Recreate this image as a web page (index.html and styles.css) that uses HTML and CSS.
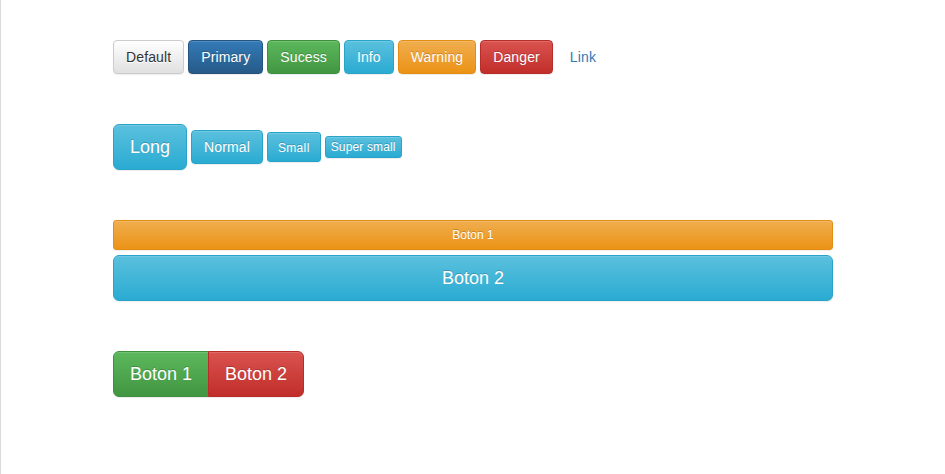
FILE: index.html
```html
<!DOCTYPE html>
<html lang="es">
<head>
<meta charset="utf-8">
<title>Botones</title>
<link rel="stylesheet" href="styles.css">
</head>
<body>
<div class="container">
  <div class="row">
    <button class="btn btn-default">Default</button>
    <button class="btn btn-primary">Primary</button>
    <button class="btn btn-success">Sucess</button>
    <button class="btn btn-info">Info</button>
    <button class="btn btn-warning">Warning</button>
    <button class="btn btn-danger">Danger</button>
    <button class="btn btn-link">Link</button>
  </div>
  <div class="row row-sizes">
    <button class="btn btn-info btn-lg">Long</button>
    <button class="btn btn-info">Normal</button>
    <button class="btn btn-info btn-sm">Small</button>
    <button class="btn btn-info btn-xs">Super small</button>
  </div>
  <div class="stack">
    <button class="btn btn-warning btn-sm btn-block">Boton 1</button>
    <button class="btn btn-info btn-lg btn-block">Boton 2</button>
  </div>
  <div class="btn-group">
    <button class="btn btn-success btn-lg">Boton 1</button>
    <button class="btn btn-danger btn-lg">Boton 2</button>
  </div>
</div>
</body>
</html>
```
FILE: styles.css
```css
* { box-sizing: border-box; }
html, body { margin: 0; padding: 0; }
body {
  background: #fff;
  border-left: 1px solid #d9d9d9;
  min-height: 474px;
  font-family: "Liberation Sans", Arial, sans-serif;
  font-size: 14px;
  line-height: 1.42857;
  color: #333;
}
.container {
  width: 750px;
  margin: 0 auto;
  padding: 40px 15px 0;
}
.row {
  display: flex;
  align-items: center;
  gap: 4px;
}
.row-sizes { margin-top: 50px; }
.stack {
  margin-top: 50px;
  display: flex;
  flex-direction: column;
  gap: 5px;
}
.btn-group {
  margin-top: 50px;
  display: flex;
}
.btn {
  display: inline-block;
  margin: 0;
  padding: 7px 12px 5px;
  font-family: inherit;
  font-size: 14px;
  line-height: 1.42857;
  letter-spacing: 0.12px;
  font-weight: 400;
  text-align: center;
  white-space: nowrap;
  border: 1px solid transparent;
  border-radius: 4px;
  color: #fff;
  text-shadow: 0 -1px 0 rgba(0,0,0,.2);
  box-shadow: inset 0 1px 0 rgba(255,255,255,.15), 0 1px 1px rgba(0,0,0,.075);
  cursor: pointer;
}
.btn-default {
  color: #333;
  text-shadow: 0 1px 0 #fff;
  background: linear-gradient(#fff 0%, #e0e0e0 100%);
  border-color: #ccc;
}
.btn-primary {
  background: linear-gradient(#337ab7 0%, #265a88 100%);
  border-color: #245580;
}
.btn-success {
  background: linear-gradient(#5cb85c 0%, #419641 100%);
  border-color: #3e8f3e;
}
.btn-info {
  background: linear-gradient(#5bc0de 0%, #2aabd2 100%);
  border-color: #28a4c9;
}
.btn-warning {
  background: linear-gradient(#f0ad4e 0%, #eb9316 100%);
  border-color: #e38d13;
}
.btn-danger {
  background: linear-gradient(#d9534f 0%, #c12e2a 100%);
  border-color: #b92c28;
}
.btn-link {
  color: #337ab7;
  background: transparent;
  border-color: transparent;
  box-shadow: none;
  text-shadow: none;
}
.btn-lg {
  padding: 10px 16px;
  font-size: 18px;
  line-height: 1.3333333;
  letter-spacing: 0;
  border-radius: 6px;
}
.btn-sm {
  padding: 6px 10px 4px;
  font-size: 12px;
  line-height: 1.5;
  letter-spacing: 0.35px;
  border-radius: 3px;
}
.btn-xs {
  padding: 1px 5px;
  font-size: 12px;
  line-height: 1.5;
  letter-spacing: 0.15px;
  border-radius: 3px;
}
.btn-block {
  display: block;
  width: 100%;
}
.stack .btn-sm {
  padding: 5px 10px;
  letter-spacing: 0;
}
.btn-group .btn:first-child {
  border-top-right-radius: 0;
  border-bottom-right-radius: 0;
}
.btn-group .btn + .btn {
  margin-left: -1px;
  border-top-left-radius: 0;
  border-bottom-left-radius: 0;
}
```
